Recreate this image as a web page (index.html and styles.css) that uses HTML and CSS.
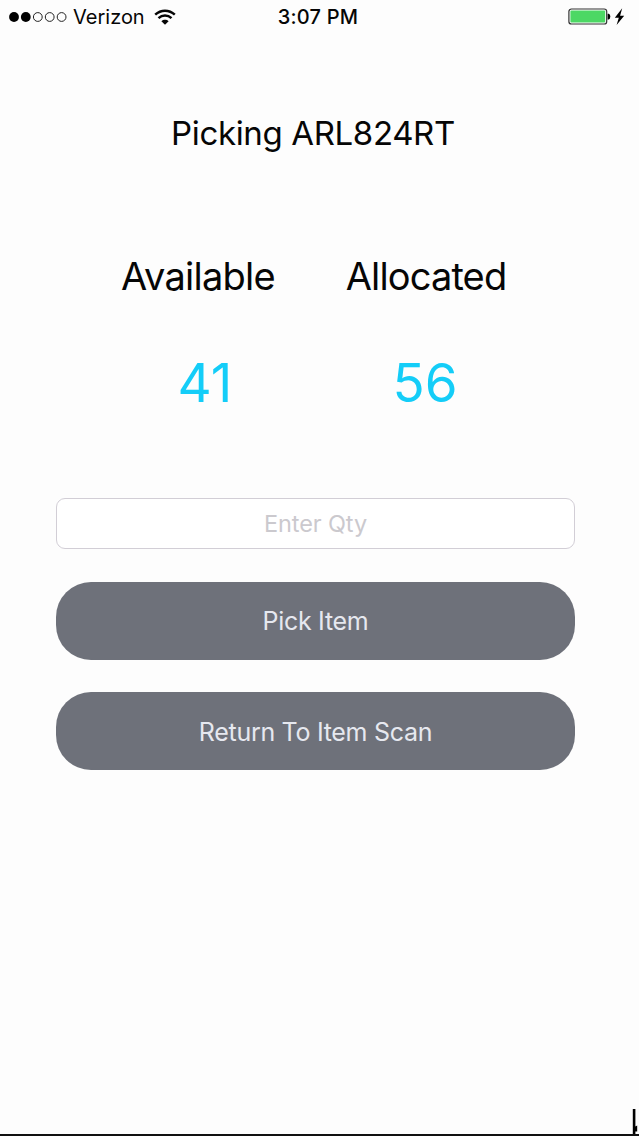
FILE: index.html
```html
<!DOCTYPE html>
<html lang="en">
<head>
	<meta charset="UTF-8">
	<meta name="viewport" content="width=device-width,initial-scale=1">
	<title>Picking</title>
	<link rel="stylesheet" href="styles.css">
</head>
<body>
	<header class="status">
		<div class="carrier">
			<svg class="signal" width="60" height="12" viewBox="0 0 60 12">
				<circle cx="6" cy="6" r="4.9"/>
				<circle cx="17.8" cy="6" r="4.9"/>
				<circle class="empty" cx="29.8" cy="6" r="4.4"/>
				<circle class="empty" cx="41.7" cy="6" r="4.4"/>
				<circle class="empty" cx="53.6" cy="6" r="4.4"/>
			</svg>
			<span class="network">Verizon</span>
			<svg class="wifi" width="22" height="17" viewBox="0 0 22 17">
				<path d="M1.2 5.6C6.9 .4 15.1 .4 20.8 5.6M4.5 9.1c3.8-3.4 9.2-3.4 13 0"/>
				<path class="dot" d="M7.4 12.2c2.1-1.9 5.1-1.9 7.2 0L11 15.8z"/>
			</svg>
		</div>
		<div class="time">3:07 PM</div>
		<div class="power">
			<svg width="60" height="20" viewBox="0 0 60 20">
				<rect class="case" x=".9" y="2" width="37.8" height="15" rx="2.6"/>
				<rect class="level" x="2.4" y="3.5" width="34.8" height="12" rx="1"/>
				<path d="M39.6 6.8h1.2q1.5.4 1.5 2.8t-1.5 2.8h-1.2z"/>
				<path d="M54.2 1.2l-7.4 9.5h4L48.6 18l7.6-9.3h-4.1z"/>
			</svg>
		</div>
	</header>
	<main>
		<h1>Picking ARL824RT</h1>
		<div class="counts">
			<div class="count available">
				<div class="label">Available</div>
				<div class="num">41</div>
			</div>
			<div class="count allocated">
				<div class="label">Allocated</div>
				<div class="num">56</div>
			</div>
		</div>
		<form class="pick">
			<input class="qty" type="text" placeholder="Enter Qty">
			<button class="btn" type="button">Pick Item</button>
			<button class="btn return" type="button">Return To Item Scan</button>
		</form>
	</main>
	<footer class="edge">
		<svg width="7" height="25" viewBox="0 0 7 25">
			<path d="M.8 0h2.6v25H.8zM3.4 17.6l1.8-1v6H3.4z"/>
		</svg>
	</footer>
</body>
</html>
```

FILE: styles.css
```css
*{
	padding: 0;
	margin: 0;
	box-sizing: border-box;
}
body{
	display: flex;
	flex-direction: column;
	height: 1136px;
	background: #fdfdfd;
	color: #060606;
	font-family: Inter, "Liberation Sans", sans-serif;
	overflow: hidden;
}
.status{
	display: grid;
	grid-template-columns: 1fr 100px 1fr;
	align-items: center;
	height: 34px;
	padding: 0 11px 0 8px;
	font-size: 20px;
}
.carrier{
	display: flex;
	align-items: center;
}
.signal{
	margin-right: 5px;
}
.signal .empty{
	fill: none;
	stroke: #222;
	stroke-width: 1;
}
.network{
	width: 72px;
	white-space: nowrap;
}
.wifi{
	margin-left: 9px;
	fill: none;
	stroke: #060606;
	stroke-width: 2.5;
}
.wifi .dot{
	fill: #060606;
	stroke: none;
}
.time{
	font-weight: 500;
	letter-spacing: .2px;
	text-align: center;
	white-space: nowrap;
}
.power{
	display: flex;
	justify-content: flex-end;
}
.case{
	fill: #fff;
	stroke: #333;
	stroke-width: 1.2;
}
.level{
	fill: #4cd864;
}
h1{
	margin-top: 79px;
	padding-right: 13px;
	font-size: 33px;
	font-weight: 400;
	letter-spacing: -.36px;
	line-height: 40px;
	text-align: center;
}
.counts{
	display: flex;
	gap: 56px;
	margin-top: 100px;
	padding-left: 114px;
}
.count{
	width: 168px;
	text-align: center;
	white-space: nowrap;
}
.allocated{
	width: 176px;
}
.label{
	font-size: 38px;
	letter-spacing: -.75px;
	line-height: 46px;
}
.allocated .label{
	letter-spacing: -.85px;
}
.num{
	margin-top: 54px;
	padding-left: 14px;
	color: #14cdf8;
	font-size: 53px;
	line-height: 60px;
}
.allocated .num{
	padding-left: 0;
	padding-right: 2px;
}
.pick{
	display: flex;
	flex-direction: column;
	margin-top: 85px;
	padding: 0 64px 0 56px;
}
.qty{
	height: 51px;
	border: 1px solid #d2ced6;
	border-radius: 9px;
	background: #fff;
	font: 23.5px Inter, "Liberation Sans", sans-serif;
	letter-spacing: -.1px;
	text-align: center;
}
.qty::placeholder{
	color: #cbc9ce;
}
.btn{
	height: 78px;
	margin-top: 32.6px;
	border: 0;
	border-radius: 35px;
	background: #6e717a;
	color: #e6e8ef;
	font: 25px Inter, "Liberation Sans", sans-serif;
	letter-spacing: -.3px;
}
.return{
	padding-top: 1px;
}
.edge{
	display: flex;
	justify-content: flex-end;
	align-items: flex-end;
	margin-top: auto;
	border-bottom: 2px solid #111;
}
```
